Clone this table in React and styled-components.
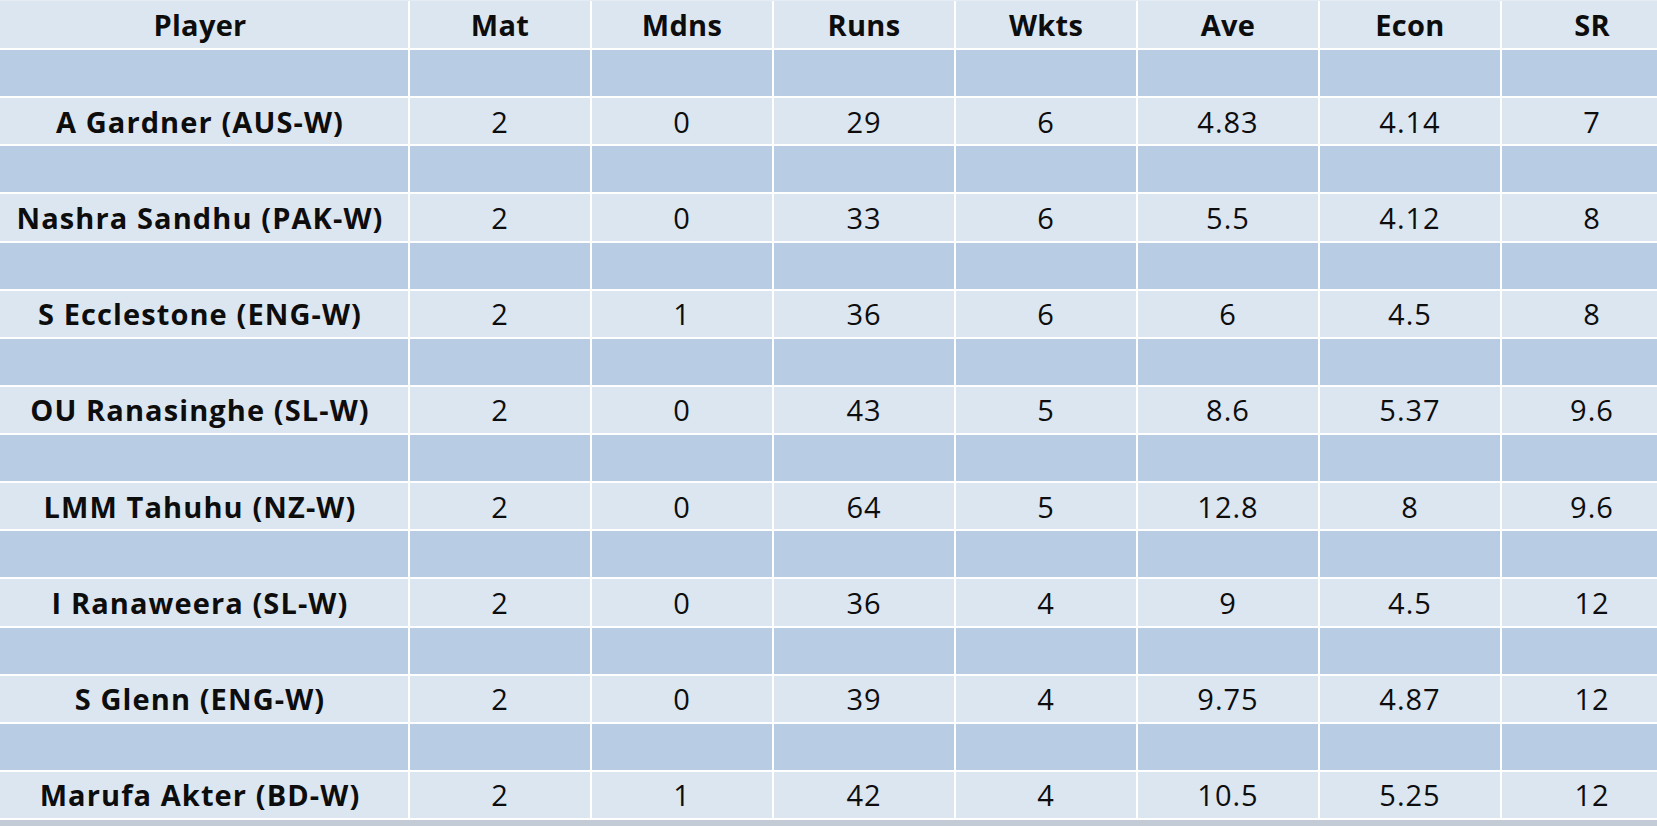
import React from "react";
import styled, { createGlobalStyle } from "styled-components";

const Global = createGlobalStyle`
  html, body {
    margin: 0;
    padding: 0;
    background: #c3cbd6;
    overflow: hidden;
  }
  #root {
    width: 1657px;
    height: 826px;
    overflow: hidden;
  }
`;

const Sheet = styled.div`
  width: 1684px;
  border-top: 1px solid #e6ecf4;
  background: #ffffff;
  padding-bottom: 2px;
`;

const Grid = styled.div`
  display: grid;
  grid-template-columns: 408px repeat(7, 180px);
  grid-template-rows: 47px;
  grid-auto-rows: 46.125px;
  column-gap: 2px;
  row-gap: 2px;
  background: #ffffff;
`;

const Cell = styled.div`
  display: flex;
  align-items: center;
  justify-content: center;
  background: ${(p) => (p.$dark ? "#b8cce4" : "#dce6f1")};
  color: #0d0d0d;
  font-family: "Open Sans", "Noto Sans", sans-serif;
  font-size: 29px;
  font-weight: ${(p) => (p.$bold ? 700 : 400)};
  letter-spacing: ${(p) => (p.$head ? "0.3px" : p.$bold ? "1.1px" : "1px")};
  padding-right: ${(p) => (p.$first ? "8px" : "0")};
  white-space: nowrap;
  overflow: hidden;
`;

const headers = ["Player", "Mat", "Mdns", "Runs", "Wkts", "Ave", "Econ", "SR"];

const rows = [
  ["A Gardner (AUS-W)", "2", "0", "29", "6", "4.83", "4.14", "7"],
  ["Nashra Sandhu (PAK-W)", "2", "0", "33", "6", "5.5", "4.12", "8"],
  ["S Ecclestone (ENG-W)", "2", "1", "36", "6", "6", "4.5", "8"],
  ["OU Ranasinghe (SL-W)", "2", "0", "43", "5", "8.6", "5.37", "9.6"],
  ["LMM Tahuhu (NZ-W)", "2", "0", "64", "5", "12.8", "8", "9.6"],
  ["I Ranaweera (SL-W)", "2", "0", "36", "4", "9", "4.5", "12"],
  ["S Glenn (ENG-W)", "2", "0", "39", "4", "9.75", "4.87", "12"],
  ["Marufa Akter (BD-W)", "2", "1", "42", "4", "10.5", "5.25", "12"],
];

export default function App() {
  return (
    <>
      <Global />
      <Sheet>
        <Grid>
          {headers.map((h, i) => (
            <Cell key={"h" + i} $bold $head $first={i === 0}>
              {h}
            </Cell>
          ))}
          {rows.map((r, ri) => (
            <React.Fragment key={ri}>
              {headers.map((_, ci) => (
                <Cell key={"s" + ri + ci} $dark $first={ci === 0} />
              ))}
              {r.map((v, ci) => (
                <Cell key={"r" + ri + ci} $bold={ci === 0} $first={ci === 0}>
                  {v}
                </Cell>
              ))}
            </React.Fragment>
          ))}
        </Grid>
      </Sheet>
    </>
  );
}
